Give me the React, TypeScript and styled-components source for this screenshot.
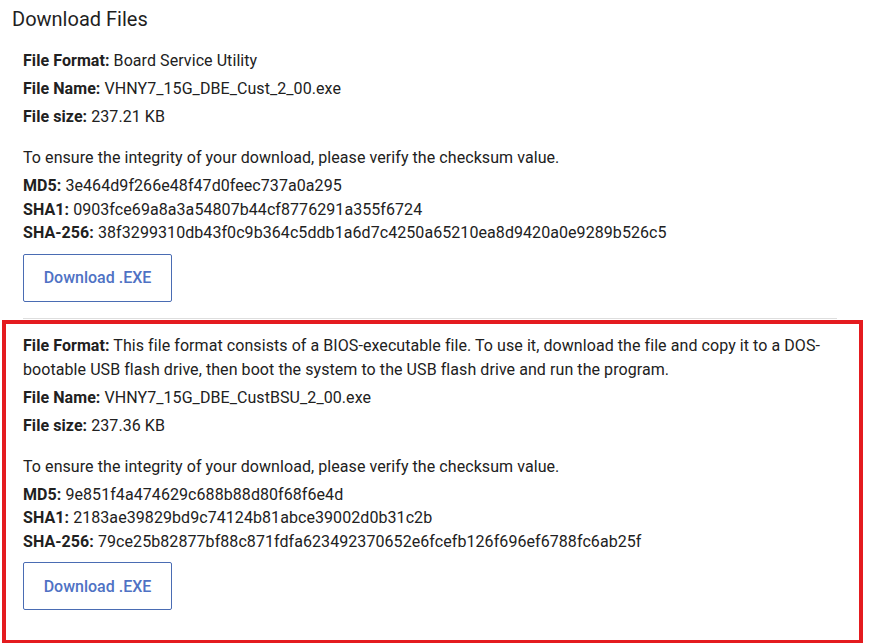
import React from "react";
import styled, { createGlobalStyle } from "styled-components";

const GlobalStyle = createGlobalStyle`
  html, body {
    margin: 0;
    padding: 0;
    background: #ffffff;
  }
  body {
    font-family: Roboto, "Liberation Sans", Arial, sans-serif;
    color: #212121;
    -webkit-font-smoothing: antialiased;
  }
`;

const Page = styled.main`
  width: 870px;
  padding: 7px 0 0 12px;
  box-sizing: border-box;
`;

const Title = styled.h2`
  margin: 0;
  font-size: 20px;
  line-height: 24px;
  font-weight: 400;
  color: #1f1f1f;
`;

const FileList = styled.div`
  margin-top: 6px;
  display: flex;
  flex-direction: column;
`;

const FileBlock = styled.section<{ $highlight?: boolean }>`
  box-sizing: border-box;
  margin-left: ${(p) => (p.$highlight ? "-10px" : "11px")};
  width: ${(p) => (p.$highlight ? "861px" : "814px")};
  padding: ${(p) => (p.$highlight ? "10px 0 30px 17px" : "12px 0 16px 0")};
  border: ${(p) => (p.$highlight ? "4px solid #e41b1f" : "none")};
  border-bottom: ${(p) => (p.$highlight ? "4px solid #e41b1f" : "1px solid #dedede")};
  margin-bottom: ${(p) => (p.$highlight ? "0" : "1px")};
`;

const Info = styled.p`
  margin: 0 0 4px;
  font-size: 16px;
  line-height: 24px;
  letter-spacing: 0.07px;
  max-width: 810px;
`;

const Label = styled.strong`
  font-weight: 700;
`;

const Checksums = styled.div`
  margin-top: 17px;
`;

const Hashes = styled.p`
  margin: 0;
  font-size: 16px;
  line-height: 23.5px;
  letter-spacing: 0.07px;
`;

const DownloadButton = styled.button`
  margin-top: 9px;
  width: 149px;
  height: 48px;
  box-sizing: border-box;
  background: #ffffff;
  border: 1px solid #4a6cb3;
  border-radius: 2px;
  font-family: Roboto, "Liberation Sans", Arial, sans-serif;
  font-size: 16px;
  font-weight: 500;
  color: #4f72c4;
  cursor: pointer;
  padding: 0;
`;

type FileEntry = {
  format: string;
  name: string;
  size: string;
  md5: string;
  sha1: string;
  sha256: string;
  highlight?: boolean;
};

const files: FileEntry[] = [
  {
    format: "Board Service Utility",
    name: "VHNY7_15G_DBE_Cust_2_00.exe",
    size: "237.21 KB",
    md5: "3e464d9f266e48f47d0feec737a0a295",
    sha1: "0903fce69a8a3a54807b44cf8776291a355f6724",
    sha256: "38f3299310db43f0c9b364c5ddb1a6d7c4250a65210ea8d9420a0e9289b526c5",
  },
  {
    format:
      "This file format consists of a BIOS-executable file. To use it, download the file and copy it to a DOS-bootable USB flash drive, then boot the system to the USB flash drive and run the program.",
    name: "VHNY7_15G_DBE_CustBSU_2_00.exe",
    size: "237.36 KB",
    md5: "9e851f4a474629c688b88d80f68f6e4d",
    sha1: "2183ae39829bd9c74124b81abce39002d0b31c2b",
    sha256: "79ce25b82877bf88c871fdfa623492370652e6fcefb126f696ef6788fc6ab25f",
    highlight: true,
  },
];

export default function App() {
  return (
    <>
      <GlobalStyle />
      <Page>
        <Title>Download Files</Title>
        <FileList>
          {files.map((f) => (
            <FileBlock key={f.name} $highlight={f.highlight}>
              <Info>
                <Label>File Format:</Label> {f.format}
              </Info>
              <Info>
                <Label>File Name:</Label> {f.name}
              </Info>
              <Info>
                <Label>File size:</Label> {f.size}
              </Info>
              <Checksums>
                <Info>To ensure the integrity of your download, please verify the checksum value.</Info>
                <Hashes>
                  <Label>MD5:</Label> {f.md5}
                  <br />
                  <Label>SHA1:</Label> {f.sha1}
                  <br />
                  <Label>SHA-256:</Label> {f.sha256}
                </Hashes>
              </Checksums>
              <DownloadButton type="button">Download .EXE</DownloadButton>
            </FileBlock>
          ))}
        </FileList>
      </Page>
    </>
  );
}
